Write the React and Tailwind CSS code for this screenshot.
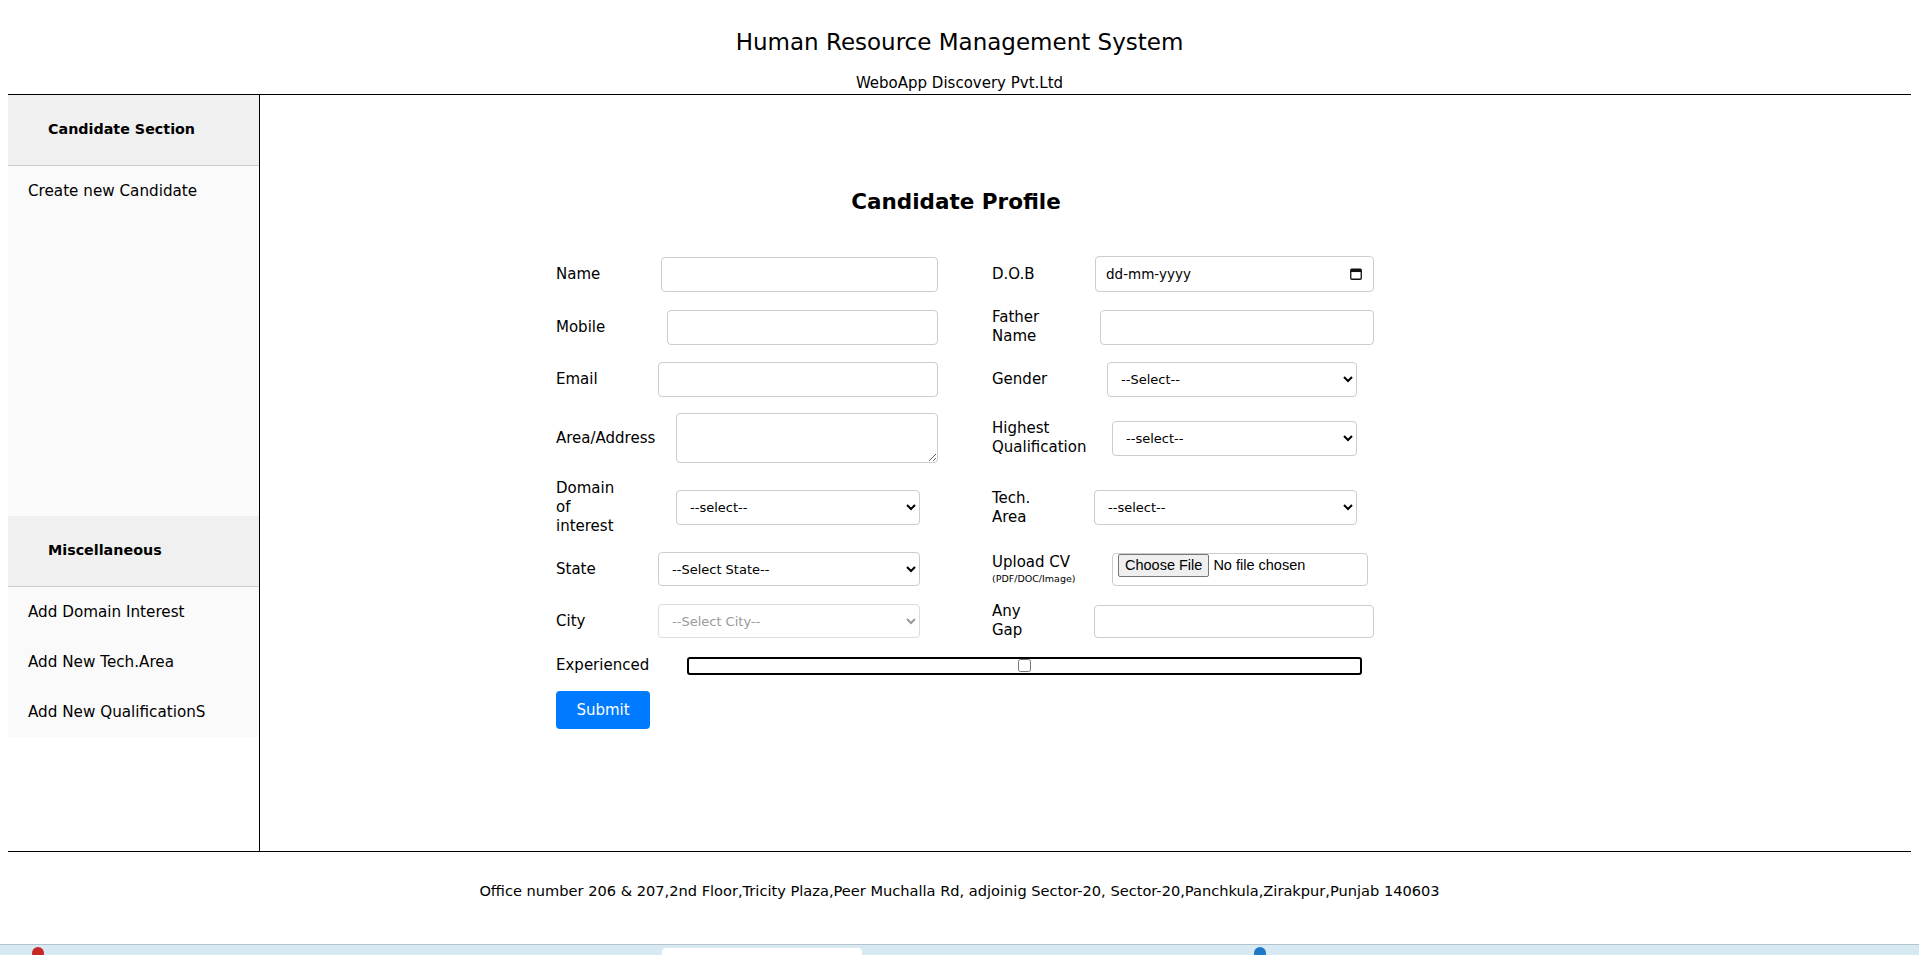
import React from 'react';

const leftFields = [
    { label: 'Name', labelClass: 'w-[105px]', kind: 'text', inputClass: 'w-[277px] h-[35px]' },
    { label: 'Mobile', labelClass: 'w-[111px]', kind: 'text', inputClass: 'w-[271px] h-[35px]' },
    { label: 'Email', labelClass: 'w-[102px]', kind: 'text', inputClass: 'w-[280px] h-[35px]' },
    { label: 'Area/Address', labelClass: 'w-[120px]', kind: 'textarea', inputClass: 'w-[262px] h-[50px]' },
    { label: 'Domain\nof\ninterest', labelClass: 'w-[120px]', kind: 'select', placeholder: '--select--', inputClass: 'w-[244px] h-[35px]' },
    { label: 'State', labelClass: 'w-[102px]', kind: 'select', placeholder: '--Select State--', inputClass: 'w-[262px] h-[34px]' },
    { label: 'City', labelClass: 'w-[102px]', kind: 'select', placeholder: '--Select City--', disabled: true, inputClass: 'w-[262px] h-[34px]' },
];

const rightFields = [
    { label: 'D.O.B', labelClass: 'w-[103px]', kind: 'date', inputClass: 'w-[279px] h-[36px]' },
    { label: 'Father\nName', labelClass: 'w-[108px]', kind: 'text', inputClass: 'w-[274px] h-[35px]' },
    { label: 'Gender', labelClass: 'w-[115px]', kind: 'select', placeholder: '--Select--', inputClass: 'w-[250px] h-[35px]' },
    { label: 'Highest\nQualification', labelClass: 'w-[120px]', kind: 'select', placeholder: '--select--', inputClass: 'w-[245px] h-[35px]' },
    { label: 'Tech.\nArea', labelClass: 'w-[102px]', kind: 'select', placeholder: '--select--', inputClass: 'w-[263px] h-[35px]' },
    { label: 'Upload CV', labelClass: 'w-[120px]', kind: 'file', inputClass: 'w-[256px] h-[33px]' },
    { label: 'Any\nGap', labelClass: 'w-[102px]', kind: 'text', inputClass: 'w-[280px] h-[33px]' },
];

const CalendarIcon = () => (
    <svg width="12" height="12" viewBox="0 0 12 12">
        <rect x="0.75" y="1.25" width="10.5" height="10" rx="1" fill="none" stroke="#111" strokeWidth="1.3" />
        <rect x="0.75" y="1.25" width="10.5" height="2.8" fill="#111" />
    </svg>
);

const Field = ({ field }) => {
    const base = 'border border-[#cccccc] rounded-[4px] bg-white';
    let control;

    switch (field.kind) {
        case 'textarea':
            control = <textarea className={`${base} ${field.inputClass} block`} />;
            break;
        case 'select':
            control = (
                <select
                    disabled={field.disabled}
                    className={`${field.inputClass} rounded-[4px] border pl-[9px] pr-[6px] text-[13px] ${field.disabled ? 'border-[#dddddd] text-[#9a9a9a]' : 'border-[#cccccc] text-black'}`}
                >
                    <option>{field.placeholder}</option>
                </select>
            );
            break;
        case 'date':
            control = (
                <div className={`${base} ${field.inputClass} flex items-center justify-between pl-[10px] pr-[11px]`}>
                    <span className="text-[13.5px]">dd-mm-yyyy</span>
                    <CalendarIcon />
                </div>
            );
            break;
        case 'file':
            control = (
                <input
                    type="file"
                    className={`${base} ${field.inputClass} pl-[5px] font-['Liberation_Sans',Arial,sans-serif] text-[14.5px] file:mr-[4px] file:h-[23px] file:rounded-[2px] file:border file:border-[#767676] file:bg-[#efefef] file:px-[6px] file:text-black`}
                />
            );
            break;
        default:
            control = <input type="text" className={`${base} ${field.inputClass} px-2`} />;
    }

    return (
        <div className="flex items-center">
            <div className={`${field.labelClass} shrink-0 text-[15px] leading-[19px] whitespace-pre-line`}>
                {field.label}
                {field.kind === 'file' && (
                    <div className="text-[9.5px] leading-[13px]">(PDF/DOC/Image)</div>
                )}
            </div>
            {control}
        </div>
    );
};

const SideItem = ({ children }) => (
    <div className="h-[50px] flex items-center pl-[20px] text-[15.2px]">{children}</div>
);

const SideHeader = ({ children }) => (
    <div className="h-[71px] bg-[#f0f0f0] border-b border-[#cccccc] flex items-center pl-[40px] text-[14.3px] font-bold">
        {children}
    </div>
);

const App = () => {
    return (
        <div className="h-[955px] overflow-hidden flex flex-col bg-white text-black font-['DejaVu_Sans',Verdana,sans-serif]">
            <header className="pt-[28px] text-center">
                <h1 className="text-[23px] leading-[28px]">Human Resource Management System</h1>
                <p className="mt-[18px] text-[15px] leading-[18px]">WeboApp Discovery Pvt.Ltd</p>
            </header>

            <div className="mx-2 mt-[2px] h-[758px] border-y border-black flex">
                <aside className="w-[252px] shrink-0 border-r border-black">
                    <div className="bg-[#fafafa]">
                        <SideHeader>Candidate Section</SideHeader>
                        <div className="h-[350px]">
                            <SideItem>Create new Candidate</SideItem>
                        </div>
                        <SideHeader>Miscellaneous</SideHeader>
                        <SideItem>Add Domain Interest</SideItem>
                        <SideItem>Add New Tech.Area</SideItem>
                        <SideItem>Add New QualificationS</SideItem>
                    </div>
                </aside>

                <main className="flex-1 pt-[94px]">
                    <div className="ml-[296px] w-[812px]">
                        <div className="w-[800px] text-center text-[21.5px] leading-[26px] font-bold">Candidate Profile</div>

                        <div className="mt-[41px] grid grid-cols-[436px_1fr] gap-y-[16px]">
                            {leftFields.map((f, i) => (
                                <React.Fragment key={f.label}>
                                    <Field field={f} />
                                    <Field field={rightFields[i]} />
                                </React.Fragment>
                            ))}
                        </div>

                        <div className="mt-[16px] flex items-center">
                            <div className="w-[131px] shrink-0 text-[15px] leading-[19px]">Experienced</div>
                            <div className="w-[675px] shrink-0 h-[18px] border-2 border-black rounded-[3px] flex items-center justify-center">
                                <input type="checkbox" className="w-[13px] h-[13px] m-0" />
                            </div>
                        </div>

                        <button
                            type="button"
                            className="mt-[16px] w-[94px] h-[38px] rounded-[4px] bg-[#007bff] text-white text-[15px]"
                        >
                            Submit
                        </button>
                    </div>
                </main>
            </div>

            <footer className="mt-[29px] text-center text-[14.6px] leading-[20px]">
                Office number 206 &amp; 207,2nd Floor,Tricity Plaza,Peer Muchalla Rd, adjoinig Sector-20, Sector-20,Panchkula,Zirakpur,Punjab 140603
            </footer>

            <div className="mt-auto h-[11px] border-t border-[#b8c4cc] bg-[#d7eaf4] flex items-start">
                <div className="ml-[32px] mt-[2px] w-[12px] h-[12px] rounded-full bg-[#c62828]" />
                <div className="ml-[618px] mt-[3px] w-[200px] h-[10px] rounded-t-[4px] bg-white" />
                <div className="ml-[392px] mt-[2px] w-[12px] h-[12px] rounded-full bg-[#1e78c8]" />
            </div>
        </div>
    );
};

export default App;
